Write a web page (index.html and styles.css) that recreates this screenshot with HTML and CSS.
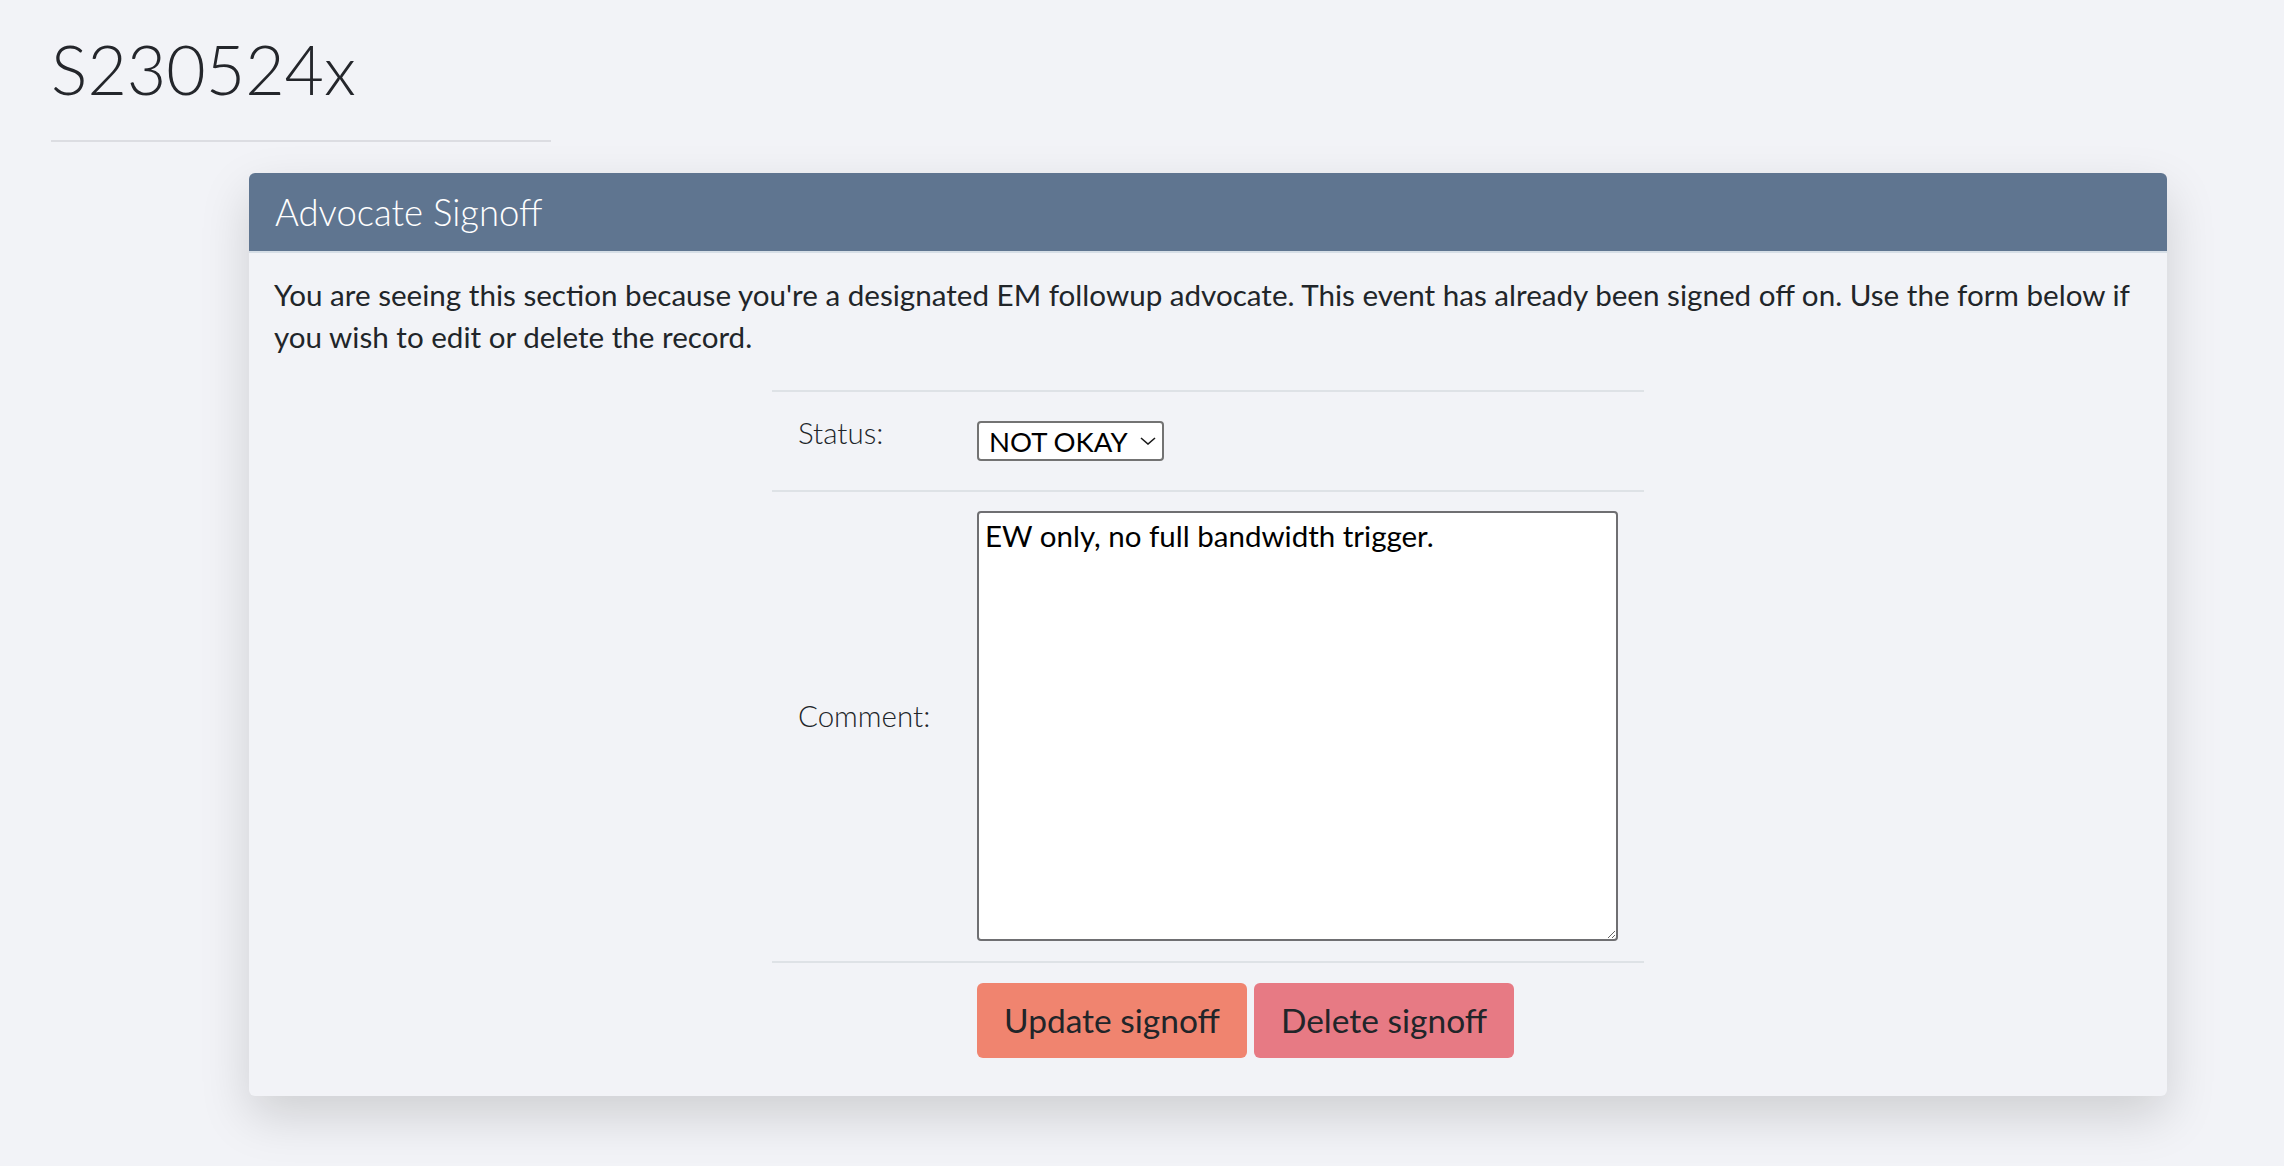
FILE: index.html
```html
<!DOCTYPE html>
<html lang="en">
<head>
    <meta charset="UTF-8">
    <meta name="viewport" content="width=device-width, initial-scale=1.0">
    <title>S230524x - Advocate Signoff</title>
    <link rel="stylesheet" href="styles.css">
</head>
<body>
    <div class="page">
        <h1 class="event-title">S230524x</h1>
        <hr class="title-rule">

        <div class="card">
            <div class="card-header">Advocate Signoff</div>
            <div class="card-body">
                <p class="intro">You are seeing this section because you're a designated EM followup advocate. This event has already been signed off on. Use the form below if you wish to edit or delete the record.</p>

                <table class="signoff-form">
                    <tr class="status-row">
                        <td class="label">Status:</td>
                        <td>
                            <span class="select-wrap">
                                <select name="status">
                                    <option>OKAY</option>
                                    <option selected>NOT OKAY</option>
                                </select>
                                <svg class="chevron" width="16" height="8" viewBox="0 0 16 8"><path d="M1 1 L8 7 L15 1" fill="none" stroke="#1a1a1a" stroke-width="1.6"/></svg>
                            </span>
                        </td>
                    </tr>
                    <tr class="comment-row">
                        <td class="label">Comment:</td>
                        <td><textarea name="comment">EW only, no full bandwidth trigger.</textarea></td>
                    </tr>
                    <tr class="action-row">
                        <td></td>
                        <td>
                            <div class="actions">
                                <button class="btn btn-update">Update signoff</button>
                                <button class="btn btn-delete">Delete signoff</button>
                            </div>
                        </td>
                    </tr>
                </table>
            </div>
        </div>
    </div>
</body>
</html>
```

FILE: styles.css
```css
* {
    box-sizing: border-box;
}
body {
    margin: 0;
    background: #f2f3f7;
    color: #212529;
    font-family: Lato, "Open Sans", sans-serif;
}
.page {
    padding: 0 51px 80px;
}
.event-title {
    margin: 28px 0 0;
    font-size: 68px;
    font-weight: 300;
    line-height: 1.2;
    color: #24262b;
}
.title-rule {
    width: 500px;
    margin: 30px 0 31px;
    border: none;
    border-top: 2px solid #dcdde2;
}
.card {
    width: 1918px;
    margin-left: 198px;
    background: #f2f3f7;
    border-radius: 6px;
    overflow: hidden;
    box-shadow: 0 20px 50px rgba(0, 0, 0, 0.15);
}
.card-header {
    height: 80px;
    padding: 0 26px;
    display: flex;
    align-items: center;
    background: #5f7590;
    border-bottom: 2px solid #d6dee6;
    color: #fff;
    font-size: 36.5px;
    font-weight: 300;
}
.card-body {
    padding: 21px 25px 18px;
}
.intro {
    margin: 0 0 32px;
    font-size: 29.6px;
    line-height: 42px;
}
.signoff-form {
    width: 872px;
    margin: 0 auto;
    border-collapse: collapse;
    font-size: 29.5px;
}
.signoff-form tr {
    border-top: 2px solid #dee2e6;
}
.signoff-form td {
    padding: 20px 26px;
    vertical-align: middle;
}
.signoff-form .label {
    width: 179px;
    padding-right: 10px;
    font-weight: 300;
    line-height: 38px;
    white-space: nowrap;
}
.status-row td {
    padding-top: 29px;
    padding-bottom: 28px;
}
.status-row .label {
    padding-top: 22px;
    padding-bottom: 38px;
}
.comment-row td {
    padding-top: 19px;
    padding-bottom: 20px;
}
.comment-row .label {
    padding-top: 9px;
    padding-bottom: 30px;
}
.select-wrap {
    position: relative;
    display: inline-flex;
    vertical-align: top;
}
select {
    appearance: none;
    height: 40px;
    padding: 0 33px 0 10px;
    font-family: Lato, sans-serif;
    font-size: 27.5px;
    color: #000;
    background: #fff;
    border: 2px solid #737373;
    border-radius: 4px;
}
.chevron {
    position: absolute;
    right: 8px;
    top: 16px;
    pointer-events: none;
}
textarea {
    display: block;
    width: 641px;
    height: 430px;
    padding: 4px 6px;
    font-family: Lato, sans-serif;
    font-size: 29.5px;
    line-height: 1.3;
    color: #000;
    background: #fff;
    border: 2px solid #6f6f72;
    border-radius: 4px;
}
.actions {
    display: flex;
    gap: 7px;
}
.btn {
    height: 75px;
    padding: 0 27px;
    border: none;
    border-radius: 6px;
    font-family: Lato, sans-serif;
    font-size: 33.5px;
    color: #212529;
    cursor: pointer;
}
.btn-update {
    background: #f0846f;
}
.btn-delete {
    background: #e77a84;
}
```
